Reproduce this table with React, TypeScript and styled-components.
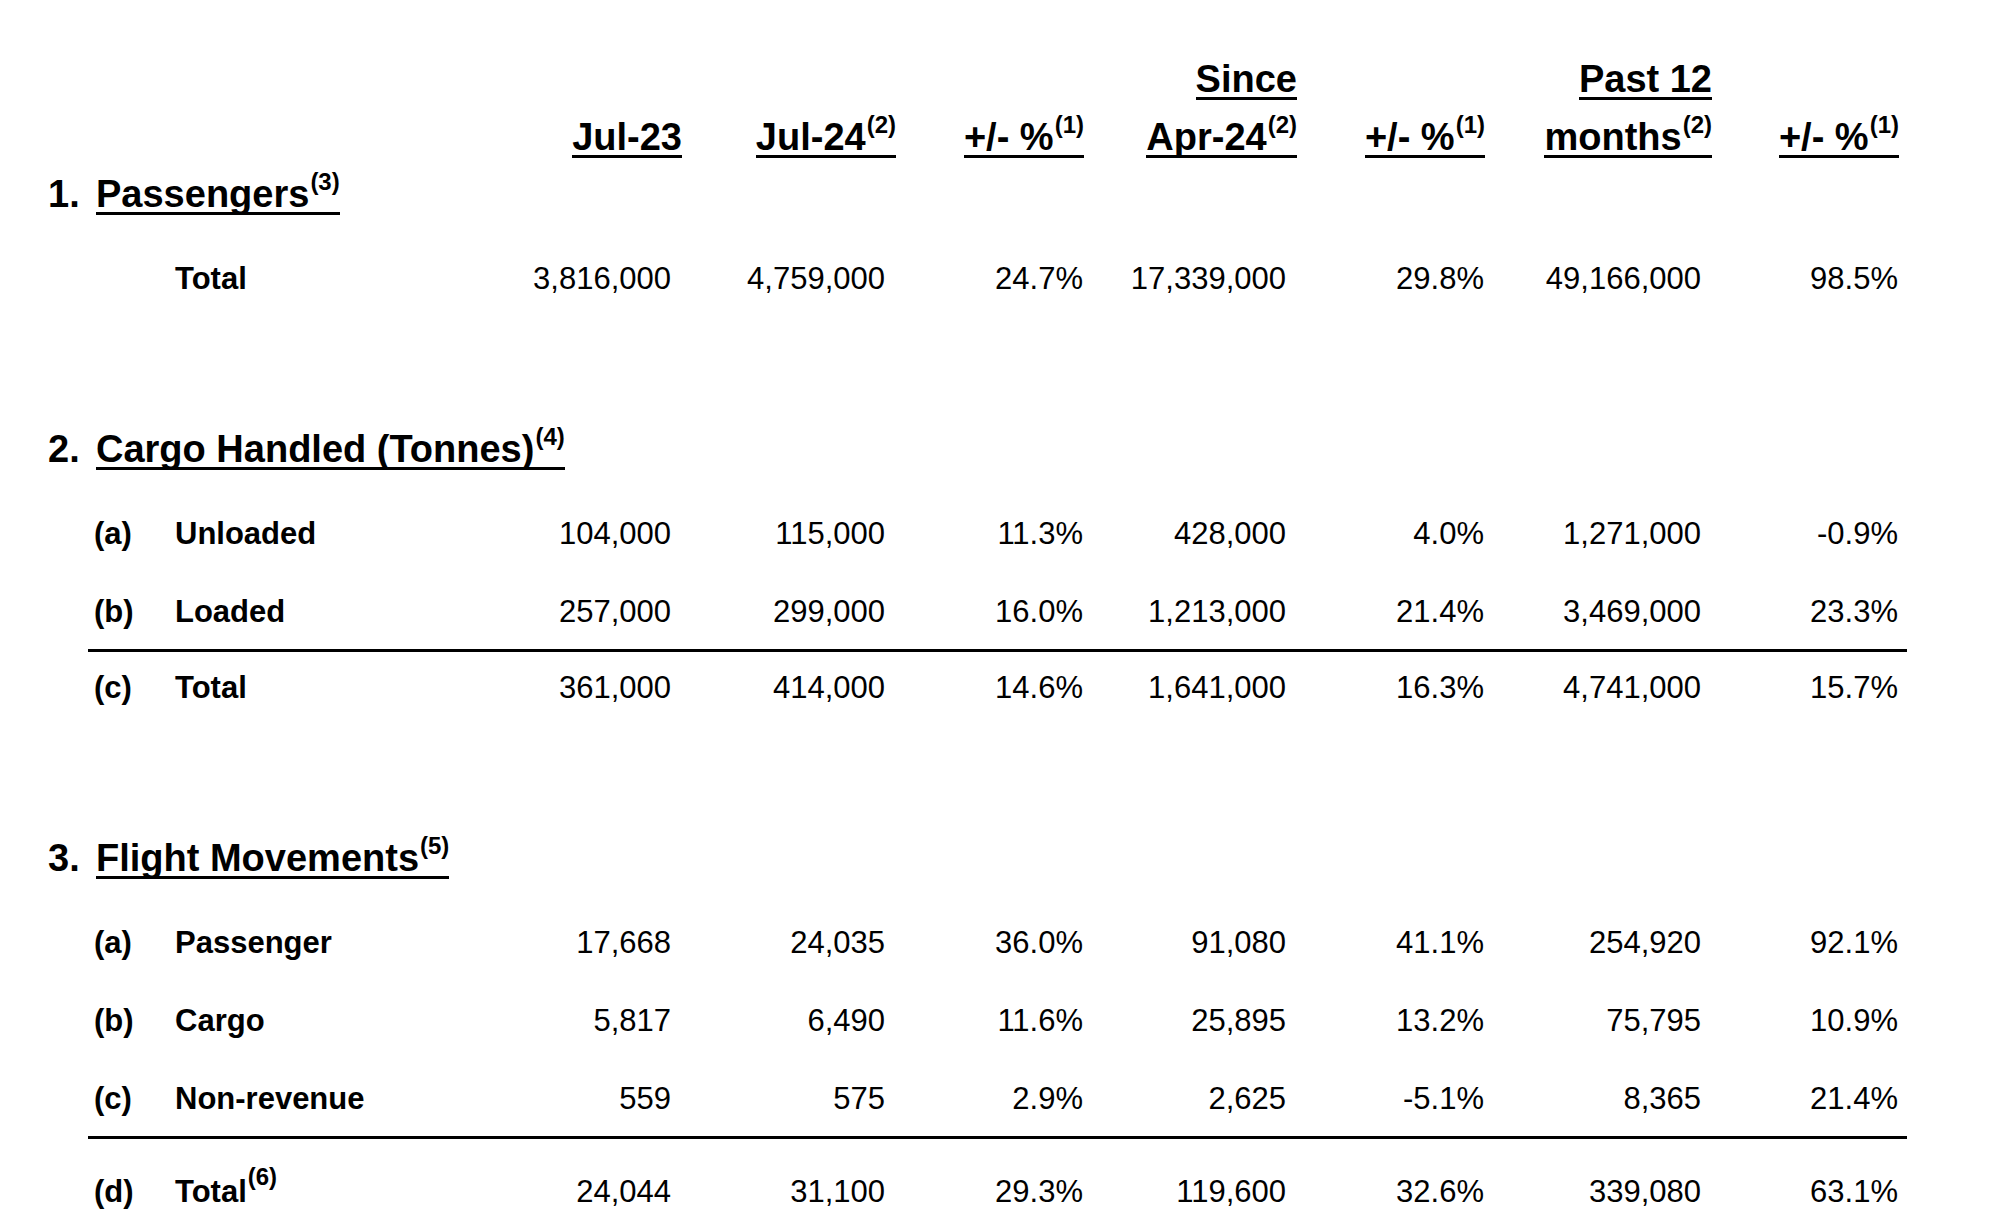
import React from 'react';
import styled, { createGlobalStyle } from 'styled-components';

const Global = createGlobalStyle`
  html, body { margin: 0; padding: 0; background: #fff; overflow: hidden; }
  body { font-family: "Liberation Sans", Arial, sans-serif; color: #000; }
`;

const COLS = '452px 182px 214px 188px 213px 188px 227px 187px';

const Page = styled.div`
  width: 2000px;
  height: 1232px;
  box-sizing: border-box;
  padding: 42px 0 0 48px;
  font-family: "Liberation Sans", Arial, sans-serif;
  color: #000;
`;

const Table = styled.div`
  width: 1851px;
`;

const HeaderLine = styled.div`
  display: grid;
  grid-template-columns: ${COLS};
  height: 58px;
`;

const HeadCell = styled.div`
  display: flex;
  justify-content: flex-end;
  align-items: flex-end;
`;

const Underlined = styled.span`
  display: inline-block;
  font-weight: 700;
  font-size: 38px;
  line-height: 35px;
  border-bottom: 3px solid #000;
  white-space: nowrap;
`;

const Sup = styled.span`
  font-size: 24px;
  font-weight: 700;
  position: relative;
  top: -17px;
  margin-left: 1px;
  line-height: 0;
`;

const Section = styled.section<{ $mt: number }>`
  margin-top: ${(p) => p.$mt}px;
`;

const TitleRow = styled.div`
  display: flex;
  align-items: flex-start;
  margin-bottom: 25px;
`;

const TitleNum = styled.span`
  width: 48px;
  font-size: 38px;
  font-weight: 700;
  line-height: 35px;
`;

const DataRow = styled.div<{ $h: number }>`
  display: grid;
  grid-template-columns: ${COLS};
  height: ${(p) => p.$h}px;
  line-height: ${(p) => p.$h}px;
  font-size: 31px;
  white-space: nowrap;
`;

const LabelCell = styled.div`
  display: flex;
  padding-left: 46px;
  font-weight: 700;
`;

const Letter = styled.span`
  width: 81px;
`;

const Num = styled.div<{ $pct?: boolean }>`
  text-align: right;
  padding-right: ${(p) => (p.$pct ? 1 : 11)}px;
`;

const Divider = styled.div<{ $mt: number }>`
  height: 3px;
  background: #000;
  margin: ${(p) => p.$mt}px -8px 0 40px;
`;

type Row = { letter?: string; label: string; sup?: string; values: string[] };

const DataLine: React.FC<{ row: Row; h: number }> = ({ row, h }) => (
  <DataRow $h={h}>
    <LabelCell>
      <Letter>{row.letter ?? ''}</Letter>
      <span>
        {row.label}
        {row.sup && <Sup>{row.sup}</Sup>}
      </span>
    </LabelCell>
    {row.values.map((v, i) => (
      <Num key={i} $pct={v.endsWith('%')}>
        {v}
      </Num>
    ))}
  </DataRow>
);

type SectionData = {
  num: string;
  title: string;
  sup: string;
  mt: number;
  rowH: number;
  rows: Row[];
  total?: Row;
  dividerMt?: number;
  totalH?: number;
};

const sections: SectionData[] = [
  {
    num: '1.',
    title: 'Passengers',
    sup: '(3)',
    mt: 19,
    rowH: 78,
    rows: [
      {
        label: 'Total',
        values: ['3,816,000', '4,759,000', '24.7%', '17,339,000', '29.8%', '49,166,000', '98.5%'],
      },
    ],
  },
  {
    num: '2.',
    title: 'Cargo Handled (Tonnes)',
    sup: '(4)',
    mt: 114,
    rowH: 78,
    rows: [
      {
        letter: '(a)',
        label: 'Unloaded',
        values: ['104,000', '115,000', '11.3%', '428,000', '4.0%', '1,271,000', '-0.9%'],
      },
      {
        letter: '(b)',
        label: 'Loaded',
        values: ['257,000', '299,000', '16.0%', '1,213,000', '21.4%', '3,469,000', '23.3%'],
      },
    ],
    dividerMt: -2,
    totalH: 71,
    total: {
      letter: '(c)',
      label: 'Total',
      values: ['361,000', '414,000', '14.6%', '1,641,000', '16.3%', '4,741,000', '15.7%'],
    },
  },
  {
    num: '3.',
    title: 'Flight Movements',
    sup: '(5)',
    mt: 118,
    rowH: 78,
    rows: [
      {
        letter: '(a)',
        label: 'Passenger',
        values: ['17,668', '24,035', '36.0%', '91,080', '41.1%', '254,920', '92.1%'],
      },
      {
        letter: '(b)',
        label: 'Cargo',
        values: ['5,817', '6,490', '11.6%', '25,895', '13.2%', '75,795', '10.9%'],
      },
      {
        letter: '(c)',
        label: 'Non-revenue',
        values: ['559', '575', '2.9%', '2,625', '-5.1%', '8,365', '21.4%'],
      },
    ],
    dividerMt: -2,
    totalH: 106,
    total: {
      letter: '(d)',
      label: 'Total',
      sup: '(6)',
      values: ['24,044', '31,100', '29.3%', '119,600', '32.6%', '339,080', '63.1%'],
    },
  },
];

const Head: React.FC<{ text?: string; sup?: string }> = ({ text, sup }) => (
  <HeadCell>
    {text && (
      <Underlined>
        {text}
        {sup && <Sup>{sup}</Sup>}
      </Underlined>
    )}
  </HeadCell>
);

export default function App() {
  return (
    <>
      <Global />
      <Page>
        <Table>
          <HeaderLine>
            <HeadCell />
            <Head />
            <Head />
            <Head />
            <Head text="Since" />
            <Head />
            <Head text="Past 12" />
            <Head />
          </HeaderLine>
          <HeaderLine>
            <HeadCell />
            <Head text="Jul-23" />
            <Head text="Jul-24" sup="(2)" />
            <Head text="+/- %" sup="(1)" />
            <Head text="Apr-24" sup="(2)" />
            <Head text="+/- %" sup="(1)" />
            <Head text="months" sup="(2)" />
            <Head text="+/- %" sup="(1)" />
          </HeaderLine>
          {sections.map((s) => (
            <Section key={s.num} $mt={s.mt}>
              <TitleRow>
                <TitleNum>{s.num}</TitleNum>
                <Underlined>
                  {s.title}
                  <Sup>{s.sup}</Sup>
                </Underlined>
              </TitleRow>
              {s.rows.map((r, i) => (
                <DataLine key={i} row={r} h={s.rowH} />
              ))}
              {s.total && (
                <>
                  <Divider $mt={s.dividerMt ?? 0} />
                  <DataLine row={s.total} h={s.totalH ?? s.rowH} />
                </>
              )}
            </Section>
          ))}
        </Table>
      </Page>
    </>
  );
}
